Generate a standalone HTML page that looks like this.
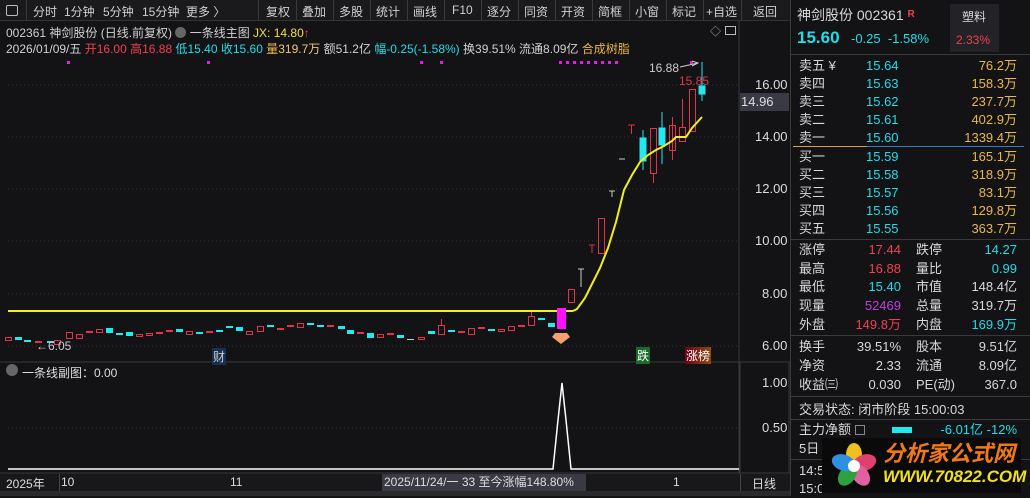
<!DOCTYPE html>
<html><head><meta charset="utf-8"><style>
*{margin:0;padding:0;box-sizing:border-box}
body{width:1030px;height:496px;background:#131215;overflow:hidden;position:relative;font-family:"Liberation Sans","Noto Sans CJK SC",sans-serif;font-size:12px;color:#d0d0d0}
.a{position:absolute;white-space:nowrap}
.tb{position:absolute;left:0;top:0;width:790px;height:21px;background:#1a191c;border-bottom:1px solid #333}
.tb span{position:absolute;top:3px;font-size:12px;color:#d0d0d0}
.sep{position:absolute;top:0;width:1px;height:21px;background:#3a3a3a}
.rp{position:absolute;left:790px;top:0;width:240px;height:496px;background:#131215;border-left:1px solid #3a3a3a}
.r{position:absolute;font-size:13px;white-space:nowrap;line-height:18px}
.w{color:#d8d8d8}.c{color:#22dde8}.y{color:#e8b84c}.rd{color:#f04050}.m{color:#c040e0}
.hl{position:absolute;left:0;width:240px;height:1px;background:#3a3a3a}
</style></head><body>
<div class="tb">
<div class="a" style="left:6px;top:5px;width:12px;height:11px;border:1px solid #bbb;border-radius:2px"></div>
<div class="sep" style="left:26px"></div>
<span style="left:33px">分时</span><span style="left:64px">1分钟</span><span style="left:103px">5分钟</span><span style="left:142px">15分钟</span><span style="left:186px">更多 〉</span>
<div class="sep" style="left:258px"></div><span style="left:266px">复权</span>
<div class="sep" style="left:296px"></div><span style="left:302px">叠加</span>
<div class="sep" style="left:333px"></div><span style="left:339px">多股</span>
<div class="sep" style="left:370px"></div><span style="left:376px">统计</span>
<div class="sep" style="left:407px"></div><span style="left:413px">画线</span>
<div class="sep" style="left:444px"></div><span style="left:452px">F10</span>
<div class="sep" style="left:481px"></div><span style="left:487px">逐分</span>
<div class="sep" style="left:518px"></div><span style="left:524px">同资</span>
<div class="sep" style="left:555px"></div><span style="left:561px">开资</span>
<div class="sep" style="left:592px"></div><span style="left:598px">简框</span>
<div class="sep" style="left:629px"></div><span style="left:635px">小窗</span>
<div class="sep" style="left:666px"></div><span style="left:672px">标记</span>
<div class="sep" style="left:703px"></div><span style="left:706px">+自选</span>
<div class="sep" style="left:741px"></div><span style="left:753px">返回</span>
</div>
<div class="a" style="left:6px;top:24px;font-size:12px">002361 神剑股份 (日线.前复权) <span style="display:inline-block;width:11px;height:11px;border-radius:6px;background:#666;vertical-align:-1px"></span> 一条线主图 <span style="color:#f0e040">JX: 14.80</span><span class="rd">↑</span></div>
<div class="a" style="left:710px;top:23px;font-size:11px;color:#aaa">◇</div>
<div class="a" style="left:725px;top:26px;width:11px;height:9px;border:1px solid #bbb"></div>
<div class="a" style="left:6px;top:40px;font-size:12px">2026/01/09/五 <span class="rd">开16.00 高16.88</span> <span class="c">低15.40 收15.60</span> <span class="y">量</span><span style="color:#f0c870">319.7万</span> 额51.2亿 <span class="c">幅-0.25(-1.58%)</span> 换39.51% 流通8.09亿 <span class="y">合成树脂</span></div>
<svg class="a" style="left:0;top:0" width="790" height="496">
<g stroke="#333" stroke-dasharray="1,3">
<line x1="8" y1="85" x2="739" y2="85"/><line x1="8" y1="137" x2="739" y2="137"/><line x1="8" y1="189" x2="739" y2="189"/><line x1="8" y1="241" x2="739" y2="241"/><line x1="8" y1="294" x2="739" y2="294"/><line x1="8" y1="346" x2="739" y2="346"/><line x1="8" y1="428" x2="739" y2="428"/>
</g>
<line x1="739" y1="20" x2="739" y2="473" stroke="#3a3a3a"/>
<line x1="0" y1="362" x2="790" y2="362" stroke="#3a3a3a"/>
<line x1="0" y1="473" x2="790" y2="473" stroke="#3a3a3a"/>
<rect x="740" y="362" width="49" height="111" fill="none" stroke="#3a3a3a"/>
<g fill="#e020e0"><rect x="67" y="61" width="3" height="3"/><rect x="207" y="61" width="3" height="3"/><rect x="420" y="61" width="3" height="3"/><rect x="440" y="61" width="3" height="3"/><rect x="559" y="61" width="3" height="3"/><rect x="566" y="61" width="3" height="3"/><rect x="573" y="61" width="3" height="3"/><rect x="580" y="61" width="3" height="3"/><rect x="587" y="61" width="3" height="3"/><rect x="594" y="61" width="3" height="3"/><rect x="601" y="61" width="3" height="3"/><rect x="608" y="61" width="3" height="3"/><rect x="615" y="61" width="3" height="3"/><rect x="690" y="61" width="3" height="3"/></g>
<g fill="none" stroke="#e0344a" stroke-width="1">
<rect x="5.5" y="337.5" width="6" height="3"/><rect x="54.5" y="340.5" width="6" height="4"/><rect x="66.5" y="332.5" width="6" height="6"/><rect x="76.5" y="334.5" width="6" height="4"/><rect x="96.5" y="329.5" width="6" height="3"/><rect x="136.5" y="334.5" width="6" height="2"/><rect x="146.5" y="333.5" width="6" height="2"/><rect x="186.5" y="331.5" width="6" height="3"/><rect x="246.5" y="331.5" width="6" height="3"/><rect x="257.5" y="326.5" width="6" height="5"/><rect x="297.5" y="323.5" width="6" height="4"/><rect x="377.5" y="334.5" width="6" height="3"/><rect x="418.5" y="337.5" width="6" height="2"/><rect x="438.5" y="325.5" width="6" height="9"/><rect x="468.5" y="328.5" width="6" height="6"/><rect x="498.5" y="329.5" width="6" height="2"/><rect x="508.5" y="326.5" width="6" height="4"/><rect x="528.5" y="316.5" width="6" height="9"/>
<line x1="441.5" y1="319" x2="441.5" y2="325"/><line x1="531.5" y1="310" x2="531.5" y2="316"/>
</g>
<g fill="#e0344a">
<rect x="35" y="341" width="7" height="2"/><rect x="86" y="331" width="7" height="2"/><rect x="156" y="332" width="7" height="2"/><rect x="166" y="330" width="7" height="2"/><rect x="206" y="331" width="7" height="2"/><rect x="277" y="328" width="7" height="2"/><rect x="287" y="325" width="7" height="2"/><rect x="327" y="325" width="7" height="2"/><rect x="357" y="332" width="7" height="2"/><rect x="387" y="333" width="7" height="2"/><rect x="458" y="331" width="7" height="2"/><rect x="478" y="327" width="7" height="2"/><rect x="518" y="325" width="7" height="2"/>
</g>
<g fill="#22e8f0">
<rect x="15" y="337" width="7" height="3"/><rect x="24" y="340" width="7" height="2"/><rect x="47" y="341" width="7" height="2"/><rect x="106" y="328" width="7" height="5"/><rect x="116" y="333" width="7" height="2"/><rect x="126" y="332" width="7" height="4"/><rect x="176" y="329" width="7" height="3"/><rect x="196" y="332" width="7" height="2"/><rect x="216" y="330" width="7" height="2"/><rect x="226" y="326" width="7" height="2"/><rect x="236" y="327" width="7" height="4"/><rect x="267" y="325" width="7" height="2"/><rect x="307" y="323" width="7" height="2"/><rect x="317" y="325" width="7" height="2"/><rect x="338" y="326" width="7" height="3"/><rect x="347" y="330" width="7" height="4"/><rect x="367" y="333" width="7" height="5"/><rect x="397" y="335" width="7" height="3"/><rect x="428" y="331" width="7" height="3"/><rect x="448" y="330" width="7" height="2"/><rect x="488" y="329" width="7" height="2"/><rect x="538" y="318" width="7" height="2"/><rect x="548" y="323" width="7" height="4"/>
</g>
<rect x="407" y="339" width="7" height="1" fill="#ccc"/>
<line x1="8" y1="311" x2="573" y2="311" stroke="#f0f020" stroke-width="2"/>
<rect x="557" y="308" width="9" height="21" fill="#ff10ff"/>
<path d="M555 333 L567 333 L570 337 L561 344 L552 337 Z" fill="#f4a070"/>
<g fill="none" stroke="#e0344a">
<rect x="568.5" y="289.5" width="6" height="13"/><rect x="598.5" y="218.5" width="6" height="35"/><rect x="650.5" y="128.5" width="6" height="45"/><rect x="669.5" y="125.5" width="6" height="25"/><rect x="679.5" y="127.5" width="6" height="14"/><rect x="689.5" y="89.5" width="6" height="42"/>
<line x1="653.5" y1="173" x2="653.5" y2="183"/><line x1="672.5" y1="117" x2="672.5" y2="160"/><line x1="682.5" y1="99" x2="682.5" y2="127"/>
<path d="M589 245h6M592 245v8M628 125h7M631.5 125v9"/>
</g>
<path d="M578 269h6M581 269v18M609 191h6M612 191v6M619 159h6" stroke="#ccc" fill="none"/>
<g stroke="#22e8f0" fill="#22e8f0">
<line x1="643" y1="130" x2="643" y2="170"/><rect x="640" y="138" width="6" height="23"/>
<line x1="662" y1="112" x2="662" y2="164"/><rect x="659" y="128" width="6" height="17"/>
<line x1="702" y1="62" x2="702" y2="101"/><rect x="699" y="86" width="6" height="8"/>
</g>
<path d="M573 311 L577 309 L585 298 L593 282 L600 268 L608 248 L616 222 L624 190 L632 175 L640 162 L648 155 L656 150 L664 146 L672 141 L676 137 L686 137 L692 128 L702 117" stroke="#f0f020" stroke-width="2" fill="none"/>
<path d="M680 67 L698 63 M692 61 L698 63 L692 66" stroke="#ccc" fill="none"/>
<polyline points="8,469 553,469 558,420 562,383 566,420 571,469 739,469" stroke="#fff" fill="none" stroke-width="1.5"/>
<circle cx="12" cy="370" r="6" fill="#666"/>
</svg>
<div class="a" style="left:649px;top:61px;font-size:12px;color:#ccc">16.88</div>
<div class="a" style="left:679px;top:74px;font-size:12px;color:#e0344a">15.85</div>
<div class="a" style="left:36px;top:339px;font-size:12px;color:#ccc">←6.05</div>
<div class="a" style="left:212px;top:348px;font-size:12px;color:#ccc;background:#163050;padding:0 1px">财</div>
<div class="a" style="left:636px;top:347px;font-size:12px;color:#fff;background:#1a6a2a;padding:0 1px">跌</div>
<div class="a" style="left:685px;top:347px;font-size:12px;color:#fff;background:linear-gradient(90deg,#700018,#8a4a10);padding:0 1px">涨榜</div>
<div class="a" style="left:22px;top:364px;font-size:12px;color:#ddd">一条线副图：0.00</div>
<div class="a" style="left:755px;top:77px;font-size:13px;color:#ddd">16.00</div>
<div class="a" style="left:740px;top:93px;width:49px;height:18px;background:#3a3a44;font-size:13px;color:#ddd;padding-left:1px;line-height:18px">14.96</div>
<div class="a" style="left:755px;top:129px;font-size:13px;color:#ddd">14.00</div>
<div class="a" style="left:755px;top:181px;font-size:13px;color:#ddd">12.00</div>
<div class="a" style="left:755px;top:233px;font-size:13px;color:#ddd">10.00</div>
<div class="a" style="left:762px;top:286px;font-size:13px;color:#ddd">8.00</div>
<div class="a" style="left:762px;top:338px;font-size:13px;color:#ddd">6.00</div>
<div class="a" style="left:762px;top:375px;font-size:13px;color:#ddd">1.00</div>
<div class="a" style="left:762px;top:420px;font-size:13px;color:#ddd">0.50</div>
<div class="a" style="left:0;top:474px;width:790px;height:17px;background:#18171a"></div>
<div class="a" style="left:6px;top:475px;font-size:12px;color:#ddd">2025年</div>
<div class="a" style="left:59px;top:474px;width:1px;height:17px;background:#444"></div>
<div class="a" style="left:61px;top:475px;font-size:12px;color:#ddd">10</div>
<div class="a" style="left:230px;top:475px;font-size:12px;color:#ddd">11</div>
<div class="a" style="left:382px;top:474px;width:204px;height:17px;background:#3a3a44;font-size:12px;color:#ddd;padding-left:2px;line-height:17px">2025/11/24/一 33 至今涨幅148.80%</div>
<div class="a" style="left:673px;top:475px;font-size:12px;color:#ddd">1</div>
<div class="a" style="left:740px;top:474px;width:1px;height:17px;background:#444"></div>
<div class="a" style="left:752px;top:475px;font-size:12px;color:#ddd">日线</div>
<div class="a" style="left:0;top:491px;width:790px;height:5px;background:#2a2a2c"></div>
<div class="rp">
<div class="r w" style="left:6px;top:6px;font-size:14px">神剑股份 002361 <span style="color:#f04050;font-size:10px;font-weight:bold;vertical-align:3px">R</span></div>
<div class="a" style="left:159px;top:4px;width:49px;height:48px;background:#232226"></div>
<div class="r w" style="left:171px;top:8px;font-size:12px">塑料</div>
<div class="r rd" style="left:165px;top:31px;font-size:12px">2.33%</div>
<div class="r c" style="left:6px;top:29px;font-size:17px;font-weight:bold">15.60</div>
<div class="r c" style="left:60px;top:30px">-0.25 &nbsp;-1.58%</div>
<div class="hl" style="top:54px"></div>
<div class="r w" style="left:8px;top:57px">卖五 ¥</div><div class="r c" style="left:75px;top:57px">15.64</div><div class="r y" style="right:13px;top:57px">76.2万</div>
<div class="r w" style="left:8px;top:75px">卖四</div><div class="r c" style="left:75px;top:75px">15.63</div><div class="r y" style="right:13px;top:75px">158.3万</div>
<div class="r w" style="left:8px;top:93px">卖三</div><div class="r c" style="left:75px;top:93px">15.62</div><div class="r y" style="right:13px;top:93px">237.7万</div>
<div class="r w" style="left:8px;top:111px">卖二</div><div class="r c" style="left:75px;top:111px">15.61</div><div class="r y" style="right:13px;top:111px">402.9万</div>
<div class="r w" style="left:8px;top:129px">卖一</div><div class="r c" style="left:75px;top:129px">15.60</div><div class="r y" style="right:13px;top:129px">1339.4万</div>
<div class="a" style="left:2px;top:146px;width:74px;height:1px;background:#d8a040"></div>
<div class="a" style="left:76px;top:146px;width:157px;height:1px;background:#3a7ac0"></div>
<div class="r w" style="left:8px;top:148px">买一</div><div class="r c" style="left:75px;top:148px">15.59</div><div class="r y" style="right:13px;top:148px">165.1万</div>
<div class="r w" style="left:8px;top:166px">买二</div><div class="r c" style="left:75px;top:166px">15.58</div><div class="r y" style="right:13px;top:166px">318.9万</div>
<div class="r w" style="left:8px;top:184px">买三</div><div class="r c" style="left:75px;top:184px">15.57</div><div class="r y" style="right:13px;top:184px">83.1万</div>
<div class="r w" style="left:8px;top:202px">买四</div><div class="r c" style="left:75px;top:202px">15.56</div><div class="r y" style="right:13px;top:202px">129.8万</div>
<div class="r w" style="left:8px;top:220px">买五</div><div class="r c" style="left:75px;top:220px">15.55</div><div class="r y" style="right:13px;top:220px">363.7万</div>
<div class="hl" style="top:239px"></div>
<div class="r w" style="left:8px;top:241px">涨停</div><div class="r rd" style="right:129px;top:241px">17.44</div><div class="r w" style="left:125px;top:241px">跌停</div><div class="r c" style="right:13px;top:241px">14.27</div>
<div class="r w" style="left:8px;top:260px">最高</div><div class="r rd" style="right:129px;top:260px">16.88</div><div class="r w" style="left:125px;top:260px">量比</div><div class="r c" style="right:13px;top:260px">0.99</div>
<div class="r w" style="left:8px;top:278px">最低</div><div class="r c" style="right:129px;top:278px">15.40</div><div class="r w" style="left:125px;top:278px">市值</div><div class="r w" style="right:13px;top:278px">148.4亿</div>
<div class="r w" style="left:8px;top:297px">现量</div><div class="r m" style="right:129px;top:297px">52469</div><div class="r w" style="left:125px;top:297px">总量</div><div class="r w" style="right:13px;top:297px">319.7万</div>
<div class="r w" style="left:8px;top:316px">外盘</div><div class="r rd" style="right:129px;top:316px">149.8万</div><div class="r w" style="left:125px;top:316px">内盘</div><div class="r c" style="right:13px;top:316px">169.9万</div>
<div class="hl" style="top:335px"></div>
<div class="r w" style="left:8px;top:338px">换手</div><div class="r w" style="right:129px;top:338px">39.51%</div><div class="r w" style="left:125px;top:338px">股本</div><div class="r w" style="right:13px;top:338px">9.51亿</div>
<div class="r w" style="left:8px;top:357px">净资</div><div class="r w" style="right:129px;top:357px">2.33</div><div class="r w" style="left:125px;top:357px">流通</div><div class="r w" style="right:13px;top:357px">8.09亿</div>
<div class="r w" style="left:8px;top:376px">收益㈢</div><div class="r w" style="right:129px;top:376px">0.030</div><div class="r w" style="left:125px;top:376px">PE(动)</div><div class="r w" style="right:13px;top:376px">367.0</div>
<div class="hl" style="top:396px"></div>
<div class="r w" style="left:8px;top:401px">交易状态: 闭市阶段 15:00:03</div>
<div class="hl" style="top:419px"></div>
<div class="r w" style="left:8px;top:421px">主力净额 <span style="display:inline-block;width:10px;height:10px;border:1px solid #888;vertical-align:-1px"></span></div>
<div class="a" style="left:101px;top:427px;width:20px;height:6px;background:#22e8f0"></div>
<div class="r c" style="right:13px;top:421px">-6.01亿 -12%</div>
<div class="r w" style="left:8px;top:440px">5日</div>
<div class="hl" style="top:459px"></div>
<div class="r w" style="left:8px;top:462px">14:5</div>
<div class="r w" style="left:8px;top:480px">15:0</div>
<div class="a" style="left:31px;top:438px;width:199px;height:55px;background:#0a0a0a"></div>
<svg class="a" style="left:38px;top:441px" width="50" height="50"><g transform="translate(25,25)">
<ellipse rx="8" ry="12" cy="-11" fill="#f0c020"/><ellipse rx="8" ry="12" cy="-11" fill="#e04070" transform="rotate(72)"/><ellipse rx="8" ry="12" cy="-11" fill="#e060a0" transform="rotate(144)"/><ellipse rx="8" ry="12" cy="-11" fill="#30a040" transform="rotate(216)"/><ellipse rx="8" ry="12" cy="-11" fill="#3090e0" transform="rotate(288)"/><circle r="6" fill="#fff"/></g></svg>
<div class="r" style="left:92px;top:441px;font-size:22px;font-weight:bold;color:#f07818;font-style:italic;line-height:26px">分析家公式网</div>
<div class="r" style="left:92px;top:466px;font-size:17px;font-weight:bold;color:#f0e020;font-style:italic;line-height:22px">WWW.70822.COM</div>
</div>
</body></html>
